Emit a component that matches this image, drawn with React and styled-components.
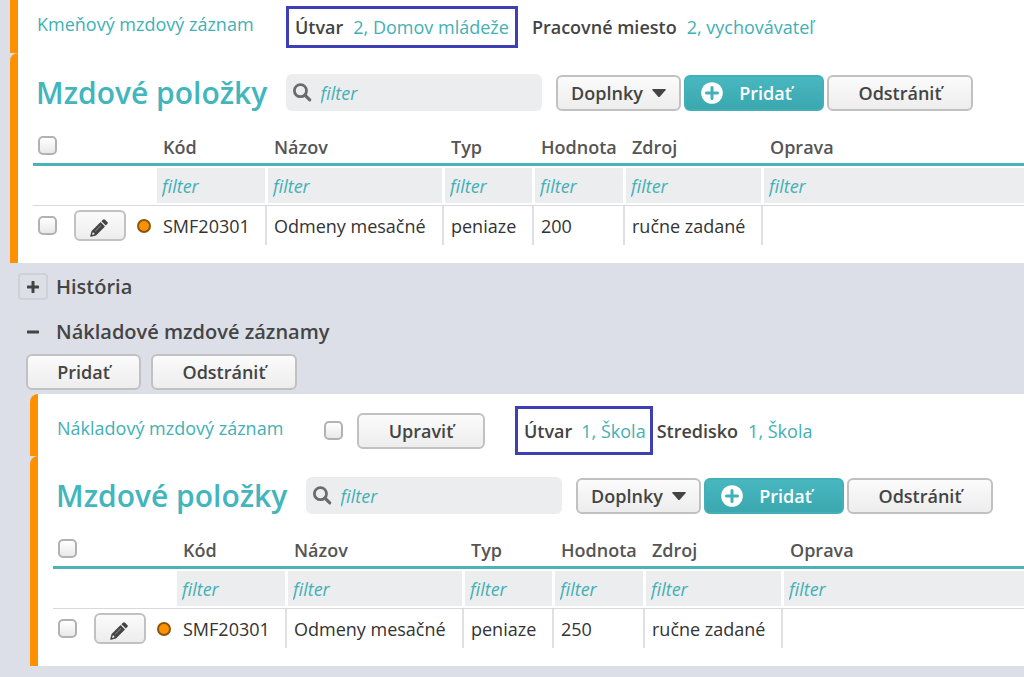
import React from "react";
import styled, { createGlobalStyle } from "styled-components";

const GlobalStyle = createGlobalStyle`
  * {
    box-sizing: border-box;
  }

  body {
    margin: 0;
    background-color: #dcdfe7;
    color: #333;
    font-family: "Open Sans", "Noto Sans", sans-serif;
    font-size: 18px;
    line-height: 24px;
  }

  button,
  input {
    font: inherit;
  }
`;

const Page = styled.main`
  min-height: 100vh;
  padding-bottom: 10px;
`;

const Record = styled.article`
  margin-left: ${(props) => (props.$nested ? "30px" : "10px")};
`;

const Section = styled.section`
  background-color: #fff;
  border-left: 8px solid #ff9100;
  border-top-left-radius: ${(props) => (props.$cut ? "0" : "8px")};
`;

const RecordHeader = styled(Section)`
  display: flex;
  align-items: center;
  padding: ${(props) => (props.$cut ? "6px 0 5px 19px" : "12px 0 1px 19px")};
`;

const RecordLink = styled.a`
  flex: 0 0 249px;
  padding-bottom: 6px;
  color: #42b0b5;
  text-decoration: none;
`;

const EditGroup = styled.div`
  display: flex;
  align-items: center;
  gap: 14px;
  margin-left: 18px;
  margin-right: 30px;
`;

const Field = styled.div`
  display: flex;
  align-items: center;
  gap: 10px;
  padding: 0 4px;
  white-space: nowrap;
`;

const MarkedField = styled(Field)`
  gap: ${(props) => (props.$tall ? "9px" : "10px")};
  height: ${(props) => (props.$tall ? "49px" : "42px")};
  margin-right: ${(props) => (props.$tall ? "0" : "10px")};
  padding: ${(props) => (props.$tall ? "0 4px 0 6px" : "0 6px")};
  border: 3px solid #3f3fb5;
`;

const FieldName = styled.span`
  color: #444;
  font-weight: 600;
`;

const FieldLink = styled.a`
  color: #42b0b5;
  text-decoration: none;
`;

const Toolbar = styled.div`
  display: flex;
  align-items: center;
  padding: 21px 0 0 18px;
`;

const Title = styled.h2`
  flex: 0 0 250px;
  margin: 0;
  color: #42b5bd;
  font-size: 30px;
  font-weight: 600;
  line-height: 36px;
  white-space: nowrap;
`;

const SearchBox = styled.label`
  display: flex;
  align-items: center;
  gap: 9px;
  width: 256px;
  height: 37px;
  margin-right: 14px;
  padding: 0 7px;
  border-radius: 6px;
  background-color: #ecedef;
`;

const FilterInput = styled.input`
  display: block;
  width: 100%;
  min-width: 0;
  height: 35px;
  padding: 0 5px;
  border: 0;
  outline: 0;
  background-color: ${(props) => (props.$plain ? "transparent" : "#ecedef")};
  color: #333;

  &::placeholder {
    color: #42b0b5;
    font-style: italic;
    opacity: 1;
  }
`;

const SearchInput = styled(FilterInput)`
  padding: 0;
`;

const Button = styled.button`
  display: flex;
  align-items: center;
  justify-content: center;
  gap: 9px;
  width: ${(props) => props.$width || "146px"};
  height: 36px;
  padding: 0;
  border: 2px solid #c1c1c1;
  border-radius: 6px;
  background: linear-gradient(#fbfbfb, #ededed);
  color: #444;
  font-weight: 600;
  cursor: pointer;
`;

const PrimaryButton = styled(Button)`
  gap: 16px;
  margin: 0 3px;
  padding-right: 15px;
  border-color: #42b0b8;
  background: linear-gradient(#49b7bf, #3ba8b0);
  color: #fff;
`;

const Checkbox = styled.input`
  appearance: none;
  flex: none;
  width: 19px;
  height: 19px;
  margin: 0;
  border: 2px solid #b2b2b2;
  border-radius: 5px;
  background: linear-gradient(#fff, #e9e9e9);

  &:checked {
    background: #42b0b5;
  }
`;

const TableWrap = styled.div`
  padding: 0 0 18px 15px;
`;

const Table = styled.table`
  width: 100%;
  table-layout: fixed;
  border-collapse: separate;
  border-spacing: 0;
`;

const Col = styled.col`
  width: ${(props) => props.$width};
`;

const HeadCell = styled.th`
  height: 55px;
  padding: 0 0 4px ${(props) => (props.$first ? "6px" : "9px")};
  border-bottom: 3px solid #4bb3b8;
  color: #555;
  font-weight: 600;
  text-align: left;
  vertical-align: bottom;
  white-space: nowrap;
`;

const SelectAllCell = styled(HeadCell)`
  padding: 0 0 8px 5px;
  line-height: 0;
`;

const FilterCell = styled.td`
  padding: 2px 0 2px ${(props) => (props.$first ? "0" : "3px")};
  border-bottom: 1px solid #d9d9dc;
`;

const Cell = styled.td`
  height: 39px;
  padding: 0 0 0 ${(props) => (props.$first ? "6px" : "7px")};
  border-left: ${(props) => (props.$first ? "0" : "2px solid #e0e0e2")};
  white-space: nowrap;
`;

const ActionsCell = styled.td`
  padding: 0 6px 0 5px;
`;

const Actions = styled.div`
  display: flex;
  align-items: center;
`;

const EditButton = styled(Button)`
  width: 52px;
  height: 31px;
  margin: 0 11px 0 17px;
  padding: 5px 2px 0 0;
`;

const Dot = styled.span`
  flex: none;
  width: 14px;
  height: 14px;
  border: 2px solid #8a560c;
  border-radius: 50%;
  background-color: #ff9100;
`;

const Groups = styled.div`
  display: flex;
  flex-direction: column;
  gap: 18px;
  padding: 10px 0 9px 18px;
`;

const Group = styled.div`
  display: flex;
  align-items: center;
  gap: 8px;
`;

const Toggle = styled.button`
  display: flex;
  align-items: center;
  justify-content: center;
  width: 30px;
  height: 27px;
  padding: 0;
  border: 2px solid ${(props) => (props.$open ? "transparent" : "#cfd1d6")};
  border-radius: 4px;
  background: none;
  color: #444;
`;

const GroupTitle = styled.h3`
  margin: 0;
  color: #444;
  font-size: 20px;
  font-weight: 600;
  line-height: 24px;
`;

const GroupButtons = styled.div`
  display: flex;
  gap: 10px;
  padding: 0 0 4px 26px;
`;

const SearchIcon = () => (
  <svg width="21" height="21" viewBox="0 0 20 20" fill="none" aria-hidden="true">
    <circle cx="8" cy="8" r="6.5" stroke="#6b6b6b" strokeWidth="3" />
    <path d="M12.8 12.8 18 18" stroke="#6b6b6b" strokeWidth="3.4" strokeLinecap="round" />
  </svg>
);

const CaretIcon = () => (
  <svg width="14" height="8" viewBox="0 0 14 8" aria-hidden="true">
    <path d="M1 0h12q1.4 0 .5 1.2L8 7.4q-1 1-2 0L.5 1.2Q-.4 0 1 0Z" fill="#444" />
  </svg>
);

const PlusCircleIcon = () => (
  <svg width="22" height="22" viewBox="0 0 22 22" aria-hidden="true">
    <circle cx="11" cy="11" r="10.8" fill="#fff" />
    <path d="M11 5.5v11M5.5 11h11" stroke="#42b0b8" strokeWidth="3" strokeLinecap="round" />
  </svg>
);

const PencilIcon = () => (
  <svg width="18" height="18" viewBox="0 0 18 18" aria-hidden="true">
    <path
      d="M11.4 2.2 15.8 6.6 17.3 5.1Q18.4 4 17.3 2.9L15.1.7Q14-.4 12.9.7Z"
      fill="#444"
    />
    <path
      fillRule="evenodd"
      d="M10.6 3 15 7.4 6 16.4 1 17.8Q0 18 .2 17L1.6 12ZM2.7 13.6 2 16 4.4 15.3 4.2 13.8Z"
      fill="#444"
    />
    <path d="M5.2 12.2 11 6.4" stroke="#999" strokeWidth="1" />
  </svg>
);

const ToggleIcon = ({ open }) => (
  <svg width="12" height="12" viewBox="0 0 12 12" aria-hidden="true">
    <path
      d={open ? "M1 6h10" : "M1 6h10M6 1v10"}
      stroke="#444"
      strokeWidth="3"
      strokeLinecap="round"
    />
  </svg>
);

const columns = [
  { key: "kod", label: "Kód", width: "108px" },
  { key: "nazov", label: "Názov", width: "177px" },
  { key: "typ", label: "Typ", width: "90px" },
  { key: "hodnota", label: "Hodnota", width: "91px" },
  { key: "zdroj", label: "Zdroj", width: "138px" },
  { key: "oprava", label: "Oprava", width: "auto" },
];

const makeRow = (hodnota) => ({
  kod: "SMF20301",
  nazov: "Odmeny mesačné",
  typ: "peniaze",
  hodnota,
  zdroj: "ručne zadané",
  oprava: "",
});

const WageItems = ({ rows }) => (
  <Section>
    <Toolbar>
      <Title>Mzdové položky</Title>
      <SearchBox>
        <SearchIcon />
        <SearchInput $plain type="text" placeholder="filter" aria-label="Mzdové položky" />
      </SearchBox>
      <Button $width="125px">
        Doplnky
        <CaretIcon />
      </Button>
      <PrimaryButton $width="140px">
        <PlusCircleIcon />
        Pridať
      </PrimaryButton>
      <Button>Odstrániť</Button>
    </Toolbar>
    <TableWrap>
      <Table>
        <colgroup>
          <Col $width="124px" />
          {columns.map((column) => (
            <Col key={column.key} $width={column.width} />
          ))}
        </colgroup>
        <thead>
          <tr>
            <SelectAllCell>
              <Checkbox type="checkbox" aria-label="Mzdové položky" />
            </SelectAllCell>
            {columns.map((column, index) => (
              <HeadCell key={column.key} $first={index === 0}>
                {column.label}
              </HeadCell>
            ))}
          </tr>
        </thead>
        <tbody>
          <tr>
            <FilterCell />
            {columns.map((column, index) => (
              <FilterCell key={column.key} $first={index === 0}>
                <FilterInput type="text" placeholder="filter" aria-label={column.label} />
              </FilterCell>
            ))}
          </tr>
          {rows.map((row) => (
            <tr key={row.kod}>
              <ActionsCell>
                <Actions>
                  <Checkbox type="checkbox" aria-label={row.kod} />
                  <EditButton aria-label="Upraviť">
                    <PencilIcon />
                  </EditButton>
                  <Dot />
                </Actions>
              </ActionsCell>
              {columns.map((column, index) => (
                <Cell key={column.key} $first={index === 0}>
                  {row[column.key]}
                </Cell>
              ))}
            </tr>
          ))}
        </tbody>
      </Table>
    </TableWrap>
  </Section>
);

const App = () => {
  return (
    <Page>
      <GlobalStyle />
      <Record>
        <RecordHeader $cut>
          <RecordLink href="#kmenovy">Kmeňový mzdový záznam</RecordLink>
          <MarkedField>
            <FieldName>Útvar</FieldName>
            <FieldLink href="#utvar-2">2, Domov mládeže</FieldLink>
          </MarkedField>
          <Field>
            <FieldName>Pracovné miesto</FieldName>
            <FieldLink href="#miesto-2">2, vychovávateľ</FieldLink>
          </Field>
        </RecordHeader>
        <WageItems rows={[makeRow("200")]} />
      </Record>

      <Groups>
        <Group>
          <Toggle aria-label="História" aria-expanded="false">
            <ToggleIcon />
          </Toggle>
          <GroupTitle>História</GroupTitle>
        </Group>
        <Group>
          <Toggle $open aria-label="Nákladové mzdové záznamy" aria-expanded="true">
            <ToggleIcon open />
          </Toggle>
          <GroupTitle>Nákladové mzdové záznamy</GroupTitle>
        </Group>
      </Groups>
      <GroupButtons>
        <Button $width="115px">Pridať</Button>
        <Button>Odstrániť</Button>
      </GroupButtons>

      <Record $nested>
        <RecordHeader>
          <RecordLink href="#nakladovy">Nákladový mzdový záznam</RecordLink>
          <EditGroup>
            <Checkbox type="checkbox" aria-label="Nákladový mzdový záznam" />
            <Button $width="128px">Upraviť</Button>
          </EditGroup>
          <MarkedField $tall>
            <FieldName>Útvar</FieldName>
            <FieldLink href="#utvar-1">1, Škola</FieldLink>
          </MarkedField>
          <Field>
            <FieldName>Stredisko</FieldName>
            <FieldLink href="#stredisko-1">1, Škola</FieldLink>
          </Field>
        </RecordHeader>
        <WageItems rows={[makeRow("250")]} />
      </Record>
    </Page>
  );
};

export default App;
